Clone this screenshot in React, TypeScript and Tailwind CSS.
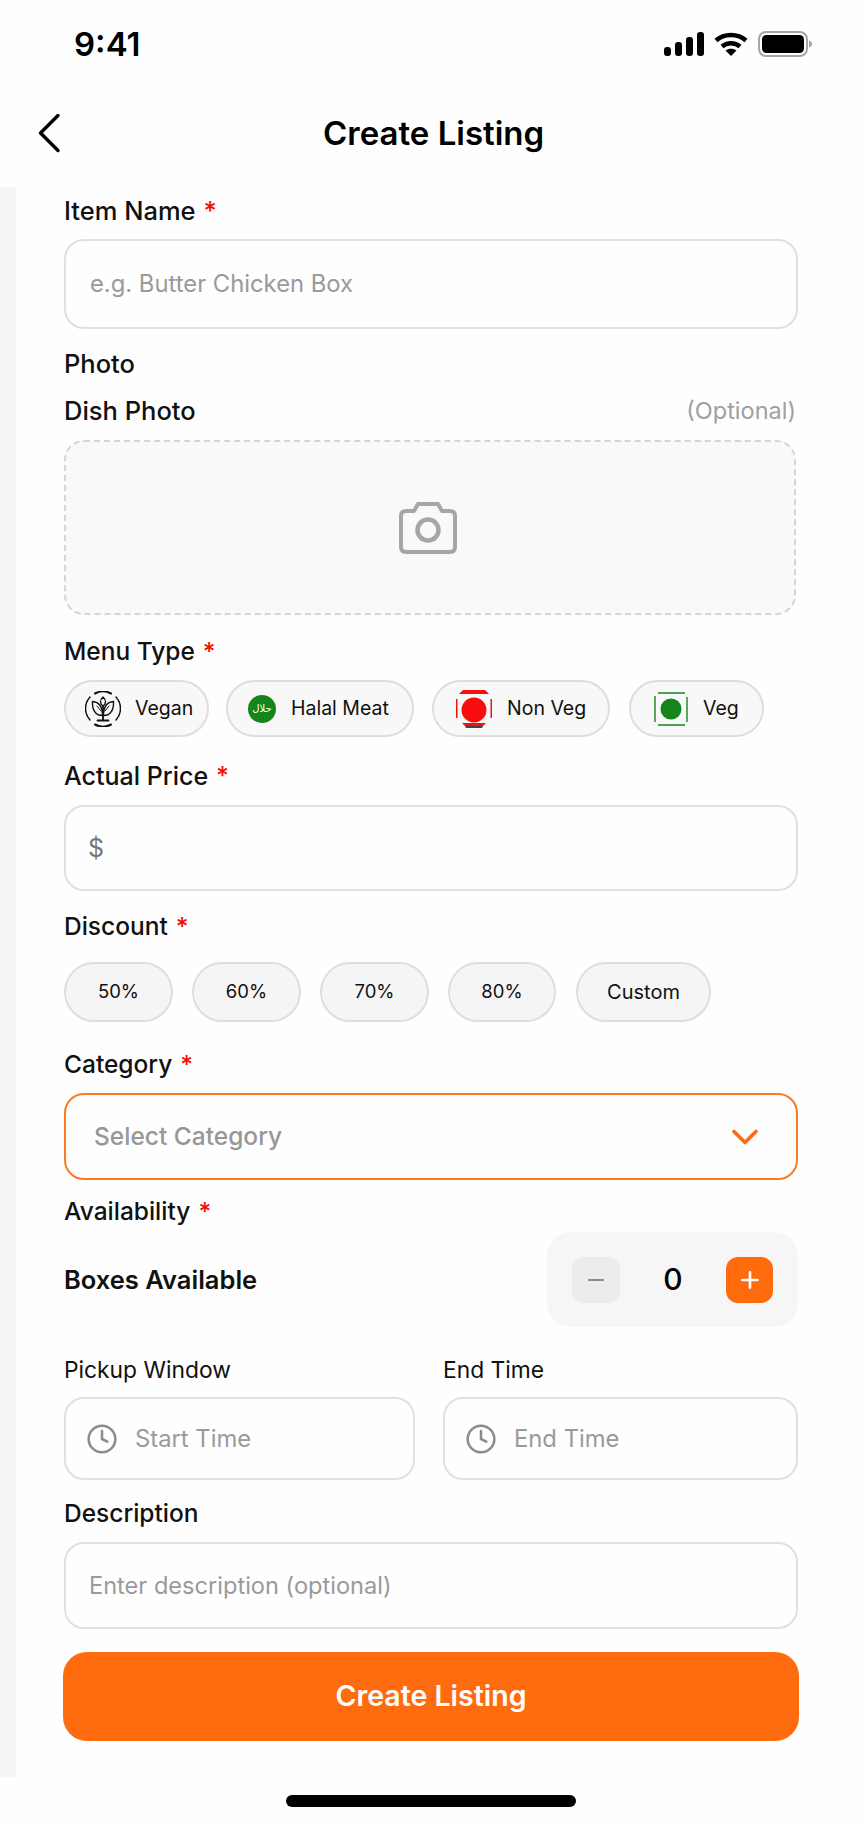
import React from "react";
import { ChevronDown, Clock, Minus, Plus } from "lucide-react";

const Label: React.FC<{ text: string; required?: boolean; className?: string; size?: string; weight?: string }> = ({
  text,
  required,
  className,
  size = "text-[24.5px]",
  weight = "font-medium",
}) => (
  <div className={`h-[30px] flex items-center leading-[30px] text-[#111] whitespace-nowrap ${size} ${weight} ${className ?? ""}`}>
    <span>{text}</span>
    {required && <span className="ml-[8px] text-[#f50f00]">*</span>}
  </div>
);

const StatusIcons = () => (
  <div className="flex items-center gap-[10px]">
    <svg width="40" height="24" viewBox="0 0 40 24" fill="#000">
      <rect x="0" y="15" width="7" height="9" rx="3" />
      <rect x="11" y="10" width="7" height="14" rx="3" />
      <rect x="22" y="5" width="7" height="19" rx="3" />
      <rect x="33" y="0" width="7" height="24" rx="3" />
    </svg>
    <svg width="34" height="24" viewBox="0 0 34 24" fill="none" stroke="#000" strokeWidth="4.5">
      <path d="M2 8.500C10 1 24 1 32 8.500" />
      <path d="M8 14.500C13 10 21 10 26 14.500" />
      <path d="M17 24l-5.500-5.500C14.500 16 19.500 16 22.500 18.500z" fill="#000" stroke="none" />
    </svg>
    <svg width="54" height="26" viewBox="0 0 54 26" fill="none">
      <rect x="1" y="1" width="48" height="24" rx="7" stroke="#a6a6a6" strokeWidth="2" />
      <rect x="4" y="4" width="42" height="18" rx="4.500" fill="#000" />
      <path d="M51 9.500c2 .5 3 2 3 3.500s-1 3-3 3.500z" fill="#a6a6a6" />
    </svg>
  </div>
);

const BackIcon = () => (
  <svg className="-mt-[9px]" width="24" height="40" viewBox="0 0 24 40" fill="none" stroke="#000" strokeWidth="3.400" strokeLinecap="round" strokeLinejoin="round">
    <path d="M21 2.500L3.500 20 21 37.500" />
  </svg>
);

const CameraIcon = () => (
  <svg className="-ml-[4px]" width="58" height="52" viewBox="0 0 58 52" fill="none" stroke="#a6a6a6" strokeWidth="4" strokeLinejoin="round">
    <path d="M2 14q0-5 5-5h8l4-7h20l4 7h8q5 0 5 5v31q0 5-5 5H7q-5 0-5-5z" />
    <circle cx="29" cy="28" r="10.500" strokeWidth="4.500" />
  </svg>
);

const VeganIcon = () => (
  <svg width="36" height="36" viewBox="0 0 36 36" fill="none" stroke="#111" strokeWidth="1.200" strokeLinecap="round">
    <path d="M10 2.500A17 17 0 0 1 26 2.500" strokeWidth="2" />
    <path d="M5 6A17 17 0 0 0 5 29" strokeWidth="1.500" />
    <path d="M31 6A17 17 0 0 1 31 29" strokeWidth="1.500" />
    <path d="M10 33.500A17 17 0 0 0 26 33.500" strokeWidth="2" />
    <path d="M18 29V15" strokeWidth="1.800" />
    <path d="M12.500 29.500h11" strokeWidth="1.800" />
    <path d="M17.500 24.500C10 24.500 7 18 7.500 10.500c6 .5 10 5 10 14z" strokeWidth="1.400" />
    <path d="M18.500 24.500c7.500 0 10.500-6.500 10-14-6 .5-10 5-10 14z" strokeWidth="1.400" />
    <path d="M18 15c-3-2-3.500-6 0-9 3.500 3 3 7 0 9z" strokeWidth="1.300" />
    <path d="M12 15l4 5M24 15l-4 5" strokeWidth="1" />
  </svg>
);

const HalalIcon = () => (
  <div className="w-[28px] h-[28px] rounded-full bg-[#14851a] flex items-center justify-center">
    <span className="text-[10px] leading-none text-white font-['DejaVu_Sans',sans-serif]">حلال</span>
  </div>
);

const NonVegIcon = () => (
  <svg width="36" height="38" viewBox="0 0 36 38">
    <rect x="0" y="9" width="1.500" height="19" fill="#f50f0f" />
    <rect x="34.500" y="9" width="1.500" height="19" fill="#f50f0f" />
    <path d="M7 0h22l4 4H3z" fill="#f50f0f" />
    <path d="M6 33h24l-3 3H9z" fill="#f50f0f" />
    <path d="M9 36h18l-1 2H10z" fill="#444" />
    <circle cx="18" cy="20" r="12.500" fill="#f70d0d" />
  </svg>
);

const VegIcon = () => (
  <svg width="34" height="34" viewBox="0 0 34 34" fill="none" stroke="#14851a" strokeWidth="1.400">
    <path d="M4 1h27M4 33h27M1 4v26M33 5v25" />
    <circle cx="17" cy="17" r="10.500" fill="#14851a" stroke="none" />
  </svg>
);

const menuTypes = [
  { name: "Vegan", icon: <VeganIcon />, width: "w-[145px]", pad: "pl-[19px]", gap: "gap-[14px]", margin: "ml-0" },
  { name: "Halal Meat", icon: <HalalIcon />, width: "w-[188px]", pad: "pl-[20px]", gap: "gap-[15px]", margin: "ml-[17px]" },
  { name: "Non Veg", icon: <NonVegIcon />, width: "w-[178px]", pad: "pl-[22px]", gap: "gap-[15px]", margin: "ml-[18px]" },
  { name: "Veg", icon: <VegIcon />, width: "w-[135px]", pad: "pl-[23px]", gap: "gap-[15px]", margin: "ml-[19px]" },
];

const discounts = [
  { name: "50%", width: "w-[109px]", margin: "ml-0", size: "text-[18.5px]" },
  { name: "60%", width: "w-[109px]", margin: "ml-[19px]", size: "text-[18.5px]" },
  { name: "70%", width: "w-[109px]", margin: "ml-[19px]", size: "text-[18.5px]" },
  { name: "80%", width: "w-[108px]", margin: "ml-[19px]", size: "text-[18.5px]" },
  { name: "Custom", width: "w-[135px]", margin: "ml-[20px]", size: "text-[20px]" },
];

export default function App() {
  return (
    <div className="w-[862px] h-[1824px] bg-[#fefefe] font-['Inter',sans-serif] text-[#111] overflow-hidden">
      {/* status bar */}
      <div className="h-[88px] pl-[74px] pr-[50px] flex items-center justify-between">
        <span className="mt-[2px] text-[33px] font-semibold text-black">9:41</span>
        <StatusIcons />
      </div>
      {/* header */}
      <div className="h-[99px] pl-[37px] flex items-center">
        <BackIcon />
        <h1 className="ml-[262px] -mt-[8px] text-[33px] font-semibold text-black whitespace-nowrap">Create Listing</h1>
      </div>
      <div className="flex h-[1590px]">
        <div className="w-[16px] shrink-0 bg-[#f5f5f5]" />
        <div className="w-[734px] ml-[48px] shrink-0">
          <Label text="Item Name" required size="text-[25.5px]" className="mt-[9px]" />
          <div className="mt-[13px] h-[90px] rounded-[20px] border-2 border-[#e0e0e0] flex items-center pl-[24px] text-[23.8px] text-[#9a9a9a]">
            e.g. Butter Chicken Box
          </div>

          <Label text="Photo" size="text-[25.5px]" className="mt-[20px]" />
          <div className="mt-[14px] w-[732px] flex items-center justify-between">
            <Label text="Dish Photo" size="text-[25.5px]" />
            <span className="text-[23.5px] text-[#a0a0a0]">(Optional)</span>
          </div>
          <div className="mt-[12px] w-[732px] h-[175px] rounded-[20px] border-2 border-dashed border-[#d4d4d4] bg-[#f9f9f9] flex items-center justify-center">
            <CameraIcon />
          </div>

          <Label text="Menu Type" required className="mt-[21px]" />
          <div className="mt-[14px] flex">
            {menuTypes.map((m) => (
              <div
                key={m.name}
                className={`${m.width} ${m.pad} ${m.gap} ${m.margin} shrink-0 h-[57px] rounded-full border-2 border-[#dedede] bg-[#f8f8f8] flex items-center text-[19.5px]`}
              >
                {m.icon}
                <span className="whitespace-nowrap">{m.name}</span>
              </div>
            ))}
          </div>

          <Label text="Actual Price" required size="text-[25px]" className="mt-[24px]" />
          <div className="mt-[14px] h-[86px] rounded-[20px] border-2 border-[#e0e0e0] flex items-center pl-[22px] text-[25px] text-[#777]">
            $
          </div>

          <Label text="Discount" required className="mt-[20px]" />
          <div className="mt-[21px] flex">
            {discounts.map((d) => (
              <div
                key={d.name}
                className={`${d.width} ${d.margin} ${d.size} shrink-0 h-[60px] rounded-[30px] border-2 border-[#dedede] bg-[#f5f5f5] flex items-center justify-center`}
              >
                {d.name}
              </div>
            ))}
          </div>

          <Label text="Category" required className="mt-[27px]" />
          <div className="mt-[14px] h-[87px] rounded-[20px] border-2 border-[#fb7a26] flex items-center justify-between pl-[28px] pr-[29px] text-[24.5px] font-medium text-[#979797]">
            Select Category
            <ChevronDown size={44} strokeWidth={2} className="text-[#fb6a14]" />
          </div>

          <Label text="Availability" required className="mt-[16px]" />
          <div className="mt-[6px] flex items-center justify-between">
            <span className="text-[25.5px] font-semibold">Boxes Available</span>
            <div className="w-[251px] h-[95px] rounded-[24px] bg-[#f6f6f6] flex items-center justify-between pl-[25px] pr-[25px]">
              <div className="w-[48px] h-[46px] rounded-[12px] bg-[#eeecea] flex items-center justify-center">
                <Minus size={24} strokeWidth={2} className="text-[#8a8a8a]" />
              </div>
              <span className="text-[30px] font-medium text-black">0</span>
              <div className="w-[47px] h-[46px] rounded-[12px] bg-[#ff6b0d] flex items-center justify-center">
                <Plus size={26} strokeWidth={2.400} className="text-white" />
              </div>
            </div>
          </div>

          <div className="mt-[28px] flex gap-[28px]">
            <div className="w-[351px]">
              <Label text="Pickup Window" size="text-[22.8px]" weight="font-normal" />
              <TimeField text="Start Time" />
            </div>
            <div className="w-[355px]">
              <Label text="End Time" size="text-[22.8px]" weight="font-normal" />
              <TimeField text="End Time" />
            </div>
          </div>

          <Label text="Description" className="mt-[18px]" />
          <div className="mt-[14px] h-[87px] rounded-[20px] border-2 border-[#e0e0e0] flex items-center pl-[23px] text-[23.6px] text-[#9a9a9a]">
            Enter description (optional)
          </div>

          <button className="mt-[23px] -mx-px w-[736px] h-[89px] rounded-[24px] bg-[#ff6b0f] text-white text-[28.500px] font-semibold block">
            Create Listing
          </button>
        </div>
      </div>
      {/* home indicator */}
      <div className="mt-[18px] mx-auto w-[290px] h-[12px] rounded-full bg-black" />
    </div>
  );
}

function TimeField({ text }: { text: string }) {
  return (
    <div className="mt-[12px] h-[83px] rounded-[20px] border-2 border-[#e0e0e0] flex items-center pl-[20px] gap-[17px] text-[23.8px] text-[#9a9a9a]">
      <Clock size={32} strokeWidth={1.900} className="text-[#8c8c8c]" />
      {text}
    </div>
  );
}
